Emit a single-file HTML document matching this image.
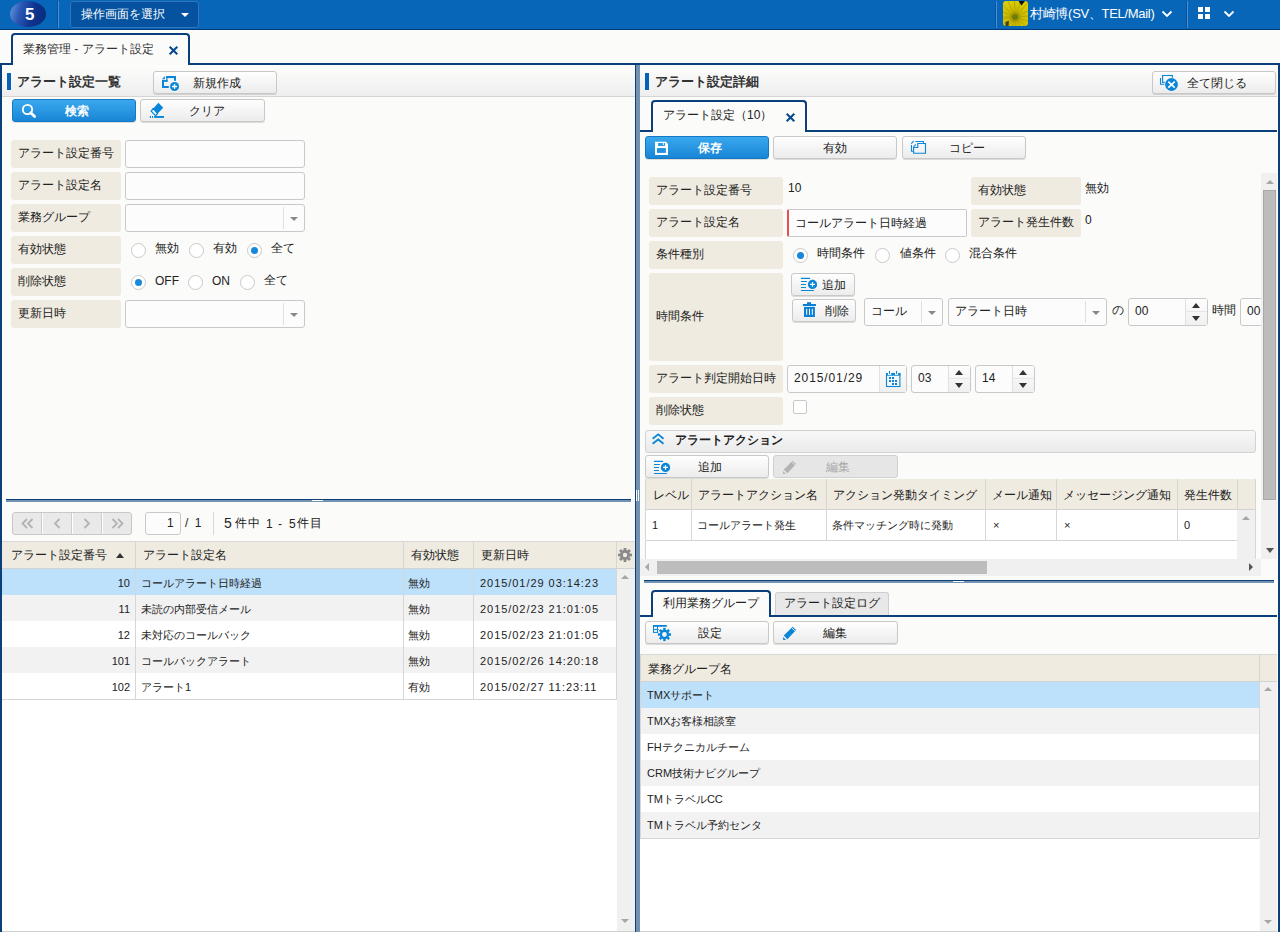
<!DOCTYPE html>
<html><head><meta charset="utf-8">
<style>
*{box-sizing:border-box;margin:0;padding:0}
html,body{width:1280px;height:932px;overflow:hidden}
body{position:relative;background:#fbfbf9;font-family:"Liberation Sans",sans-serif;font-size:12px;color:#222}
.a{position:absolute}
.t{position:absolute;white-space:nowrap;line-height:1}
.sm{font-size:11px}
/* header */
#hdr{left:0;top:0;width:1280px;height:30px;background:#0866b9;border-bottom:1px solid #023a78}
.vdiv{position:absolute;top:1px;width:2px;height:27px;border-left:1px solid #0552a0;background:#4d8fd2}
.btn{position:absolute;border:1px solid #c8c8c8;border-radius:3px;background:linear-gradient(#fefefe,#ececec);box-shadow:0 1px 0 rgba(0,0,0,.12)}
.btn.p{border-color:#1677c4;background:linear-gradient(#3aa8ee,#1886d6)}
.btn.d{background:#e6e6e6;border-color:#d0d0d0;box-shadow:none}
.lbl{position:absolute;background:#efebe0;border-radius:3px;height:28px}
.lbl span{position:absolute;left:7px;top:7px;white-space:nowrap;line-height:1;color:#222}
.inp{position:absolute;background:#fcfcfc;border:1px solid #c9c9c9;border-radius:3px;height:28px}
.sel .arr{position:absolute;right:0;top:2px;bottom:2px;width:21px;border-left:1px solid #e0e0e0}
.sel .arr:after{content:"";position:absolute;left:6px;top:10px;border-left:4px solid transparent;border-right:4px solid transparent;border-top:4px solid #888}
.rad{position:absolute;width:15px;height:15px;border:1px solid #c9c9c9;border-radius:50%;background:#fff}
.rad.on:after{content:"";position:absolute;left:3px;top:3px;width:7px;height:7px;border-radius:50%;background:#1a88d8}
.sech{position:absolute;height:33px;background:linear-gradient(#fdfdfc,#eeeeee);border-bottom:1px solid #d4d4d4}
.acc{position:absolute;width:4px;height:17px;background:#0562b8}
.grid .hd{position:absolute;background:#efebe0;border-bottom:1px solid #d2d2d2}
.vl{position:absolute;width:1px;background:#d6d6d6}
.hl{position:absolute;height:1px;background:#d6d6d6}
</style></head><body>

<!-- HEADER -->
<div id="hdr" class="a"></div>
<div class="a" style="left:10px;top:1px;width:36px;height:26px;border-radius:50%;background:linear-gradient(105deg,#6a9ae0 0%,#2a56b4 30%,#0f3590 60%,#072a78 100%)"></div>
<div class="t" style="left:25px;top:6px;font-size:17px;font-weight:bold;color:#fff">5</div>
<div class="vdiv" style="left:57px"></div>
<div class="a" style="left:70px;top:1px;width:129px;height:27px;background:#0553a0;border:1px solid #2f74bd;border-radius:3px"></div>
<div class="t" style="left:81px;top:8px;font-size:12px;color:#fff">操作画面を選択</div>
<div class="a" style="left:181px;top:13px;border-left:4px solid transparent;border-right:4px solid transparent;border-top:4px solid #fff"></div>

<div class="vdiv" style="left:995px"></div>
<svg class="a" style="left:1003px;top:1px" width="25" height="25" viewBox="0 0 25 25"><defs><clipPath id="avc"><rect width="25" height="25" rx="3"/></clipPath><radialGradient id="avg" cx="0.48" cy="0.64" r="0.7"><stop offset="0" stop-color="#6a8a10"/><stop offset="0.15" stop-color="#9a8a00"/><stop offset="0.35" stop-color="#c8b800"/><stop offset="1" stop-color="#dccf08"/></radialGradient></defs><g clip-path="url(#avc)"><rect width="25" height="25" fill="url(#avg)"/><path d="M12 16 L-8.0 16.0" stroke="#a89800" stroke-width="0.9" opacity="0.7"/><path d="M12 16 L-6.5 8.5" stroke="#a89800" stroke-width="0.9" opacity="0.7"/><path d="M12 16 L-2.4 2.1" stroke="#a89800" stroke-width="0.9" opacity="0.7"/><path d="M12 16 L3.9 -2.3" stroke="#a89800" stroke-width="0.9" opacity="0.7"/><path d="M12 16 L11.3 -4.0" stroke="#a89800" stroke-width="0.9" opacity="0.7"/><path d="M12 16 L18.8 -2.8" stroke="#a89800" stroke-width="0.9" opacity="0.7"/><path d="M12 16 L25.4 1.1" stroke="#a89800" stroke-width="0.9" opacity="0.7"/><path d="M12 16 L30.0 7.2" stroke="#a89800" stroke-width="0.9" opacity="0.7"/><path d="M12 16 L32.0 14.6" stroke="#a89800" stroke-width="0.9" opacity="0.7"/><path d="M12 16 L31.0 22.2" stroke="#a89800" stroke-width="0.9" opacity="0.7"/><path d="M12 16 L27.3 28.9" stroke="#a89800" stroke-width="0.9" opacity="0.7"/><path d="M12 16 L21.4 33.7" stroke="#a89800" stroke-width="0.9" opacity="0.7"/><path d="M12 16 L14.1 35.9" stroke="#a89800" stroke-width="0.9" opacity="0.7"/><path d="M12 16 L6.5 35.2" stroke="#a89800" stroke-width="0.9" opacity="0.7"/><path d="M12 16 L-0.3 31.8" stroke="#a89800" stroke-width="0.9" opacity="0.7"/><path d="M12 16 L-5.3 26.0" stroke="#a89800" stroke-width="0.9" opacity="0.7"/><path d="M12 16 L-7.8 18.8" stroke="#a89800" stroke-width="0.9" opacity="0.7"/><path d="M15.5 0 H22 L18.5 4.5 Z" fill="#111"/><path d="M2.5 21 L6 20 L5.5 25 L2.5 25 Z" fill="#222" opacity="0.8"/><circle cx="12" cy="16" r="2.8" fill="#5a7a10" opacity="0.8"/></g></svg>
<div class="t" style="left:1030px;top:7px;font-size:13px;color:#fff;letter-spacing:-0.3px">村崎博(SV、TEL/Mail)</div>
<svg class="a" style="left:1161px;top:10px" width="12" height="8" viewBox="0 0 12 8"><path d="M1.5 1.5 L6 6 L10.5 1.5" stroke="#fff" stroke-width="1.8" fill="none"/></svg>
<div class="vdiv" style="left:1186px"></div>
<div class="a" style="left:1198px;top:7px;width:5px;height:5px;background:#fff"></div>
<div class="a" style="left:1205px;top:7px;width:5px;height:5px;background:#fff"></div>
<div class="a" style="left:1198px;top:14px;width:5px;height:5px;background:#fff"></div>
<div class="a" style="left:1205px;top:14px;width:5px;height:5px;background:#fff"></div>
<svg class="a" style="left:1223px;top:10px" width="12" height="8" viewBox="0 0 12 8"><path d="M1.5 1.5 L6 6 L10.5 1.5" stroke="#fff" stroke-width="1.8" fill="none"/></svg>

<!-- MAIN TAB -->
<div class="a" style="left:0;top:63px;width:1280px;height:2px;background:#0b3f7c"></div>
<div class="a" style="left:11px;top:33px;width:179px;height:32px;background:#fbfbf9;border:2px solid #0b3f7c;border-bottom:none;border-radius:4px 4px 0 0"></div>
<div class="t" style="left:23px;top:43px;color:#333">業務管理 - アラート設定</div>
<svg class="a" style="left:167px;top:44px" width="12" height="12" viewBox="0 0 12 12"><path d="M2.7 2.7L10.3 10.3M10.3 2.7L2.7 10.3" stroke="#0a4a8c" stroke-width="2.1"/></svg>
<div class="a" style="left:0;top:63px;width:2px;height:869px;background:#0b3f7c"></div>
<div class="a" style="left:1278px;top:63px;width:2px;height:869px;background:#0b3f7c"></div>

<!-- LEFT PANEL -->
<!-- left section header -->
<div class="sech" style="left:2px;top:65px;width:633px;height:32px"></div>
<div class="acc" style="left:7px;top:73px"></div>
<div class="t" style="left:17px;top:75px;font-size:13px;font-weight:bold;color:#333">アラート設定一覧</div>
<div class="btn" style="left:153px;top:71px;width:124px;height:23px"></div>
<svg class="a" style="left:161px;top:75px" width="18" height="17" viewBox="0 0 18 17"><g fill="#0a86d8"><path d="M1 4.2 L3.9 1 V4.2 Z"/><rect x="5.2" y="1" width="9.8" height="2.1"/><rect x="13" y="1" width="2" height="4.8"/><rect x="5.2" y="1" width="1.3" height="5.8"/><rect x="1" y="5" width="5.5" height="1.8"/><rect x="1" y="5" width="2" height="8"/><rect x="1" y="11" width="6.8" height="2"/></g><circle cx="13.55" cy="11.5" r="5.2" fill="#f5f5f5"/><circle cx="13.55" cy="11.5" r="4.5" fill="#0a86d8"/><path d="M11 11.5H16.1M13.55 9V14" stroke="#fff" stroke-width="1.3"/></svg>
<div class="t" style="left:193px;top:77px">新規作成</div>

<div class="btn p" style="left:12px;top:99px;width:124px;height:23px"></div>
<svg class="a" style="left:21px;top:103px" width="16" height="16" viewBox="0 0 16 16"><circle cx="6.5" cy="6.5" r="4.7" stroke="#fff" stroke-width="1.8" fill="none"/><path d="M9.8 9.8 L13.6 13.6" stroke="#fff" stroke-width="2.8" stroke-linecap="round"/></svg>
<div class="t" style="left:65px;top:105px;color:#fff;font-weight:bold">検索</div>
<div class="btn" style="left:140px;top:99px;width:125px;height:23px"></div>
<svg class="a" style="left:145px;top:100px" width="20" height="20" viewBox="0 0 20 20"><path d="M13.4 2.8 L18.2 7.8 L12.5 13.7 L8.3 8.5 Z" fill="#0a86d8"/><path d="M8.3 8.5 L12.5 13.7 L10.5 15.6 L6.2 11.1 Z" fill="#fff" stroke="#0a86d8" stroke-width="1.3" stroke-linejoin="round"/><g fill="#0a86d8"><rect x="9.1" y="16" width="9.9" height="1.9"/><rect x="4.8" y="16" width="1.2" height="1.9"/><rect x="7" y="16" width="1.1" height="1.9"/></g></svg>
<div class="t" style="left:189px;top:105px">クリア</div>

<!-- form -->
<div class="lbl" style="left:11px;top:140px;width:110px"><span>アラート設定番号</span></div>
<div class="inp" style="left:125px;top:140px;width:180px"></div>
<div class="lbl" style="left:11px;top:172px;width:110px"><span>アラート設定名</span></div>
<div class="inp" style="left:125px;top:172px;width:180px"></div>
<div class="lbl" style="left:11px;top:204px;width:110px"><span>業務グループ</span></div>
<div class="inp sel" style="left:125px;top:204px;width:180px"><div class="arr"></div></div>
<div class="lbl" style="left:11px;top:236px;width:110px"><span>有効状態</span></div>
<div class="rad" style="left:131px;top:243px"></div><div class="t" style="left:155px;top:242px">無効</div>
<div class="rad" style="left:189px;top:243px"></div><div class="t" style="left:213px;top:242px">有効</div>
<div class="rad on" style="left:247px;top:243px"></div><div class="t" style="left:271px;top:242px">全て</div>
<div class="lbl" style="left:11px;top:268px;width:110px"><span>削除状態</span></div>
<div class="rad on" style="left:131px;top:275px"></div><div class="t" style="left:155px;top:275px">OFF</div>
<div class="rad" style="left:188px;top:275px"></div><div class="t" style="left:212px;top:275px">ON</div>
<div class="rad" style="left:240px;top:275px"></div><div class="t" style="left:264px;top:274px">全て</div>
<div class="lbl" style="left:11px;top:300px;width:110px"><span>更新日時</span></div>
<div class="inp sel" style="left:125px;top:300px;width:180px"><div class="arr"></div></div>

<!-- splitter horizontal -->
<div class="a" style="left:6px;top:499px;width:625px;height:3px;border-top:1px solid #0a3f7a;background:#7391b0"></div>
<div class="a" style="left:312px;top:500px;width:11px;height:1px;background:#fff"></div>

<!-- pager -->
<div class="a" style="left:12px;top:512px;width:120px;height:23px;border:1px solid #c8c8c8;border-radius:3px;background:#e9e9e9"></div>
<div class="vl" style="left:41px;top:513px;height:21px;background:#cdcdcd"></div><div class="vl" style="left:42px;top:513px;height:21px;background:#fff"></div>
<div class="vl" style="left:71px;top:513px;height:21px;background:#cdcdcd"></div><div class="vl" style="left:72px;top:513px;height:21px;background:#fff"></div>
<div class="vl" style="left:101px;top:513px;height:21px;background:#cdcdcd"></div><div class="vl" style="left:102px;top:513px;height:21px;background:#fff"></div>
<svg class="a" style="left:12px;top:512px" width="120" height="23" viewBox="0 0 120 23"><g stroke="#b3b3b3" stroke-width="1.8" fill="none"><path d="M15 7 L10.5 11.5 L15 16 M20.5 7 L16 11.5 L20.5 16"/><path d="M47.5 7 L43 11.5 L47.5 16"/><path d="M72.5 7 L77 11.5 L72.5 16"/><path d="M100.5 7 L105 11.5 L100.5 16 M106 7 L110.5 11.5 L106 16"/></g></svg>
<div class="inp" style="left:145px;top:512px;width:36px;height:23px;border-radius:3px"></div>
<div class="t" style="left:167px;top:517px">1</div>
<div class="t" style="left:185px;top:517px;letter-spacing:1.5px">/ 1</div>
<div class="vl" style="left:213px;top:512px;height:23px;background:#d8d8d8"></div>
<div class="t" style="left:224px;top:516px;font-size:14px;color:#222">5</div>
<div class="t" style="left:235px;top:517px;font-size:12px;letter-spacing:1px">件中</div>
<div class="t" style="left:266px;top:518px;font-size:12px">1</div>
<div class="t" style="left:278px;top:518px;font-size:12px">-</div>
<div class="t" style="left:289px;top:518px;font-size:12px">5</div>
<div class="t" style="left:297px;top:517px;font-size:12px;letter-spacing:1px">件目</div>

<!-- grid -->
<div class="a" style="left:2px;top:541px;width:633px;height:28px;background:#efebe0;border-top:1px solid #d8d8d8;border-bottom:1px solid #d2d2d2"></div>
<div class="vl" style="left:135px;top:542px;height:157px"></div>
<div class="vl" style="left:403px;top:542px;height:157px"></div>
<div class="vl" style="left:473px;top:542px;height:157px"></div>
<div class="vl" style="left:616px;top:542px;height:26px"></div>
<div class="t" style="left:11px;top:549px">アラート設定番号</div>
<div class="a" style="left:116px;top:553px;border-left:4px solid transparent;border-right:4px solid transparent;border-bottom:5px solid #333"></div>
<div class="t" style="left:143px;top:549px">アラート設定名</div>
<div class="t" style="left:411px;top:549px">有効状態</div>
<div class="t" style="left:481px;top:549px">更新日時</div>
<svg class="a" style="left:617px;top:547px" width="16" height="16" viewBox="0 0 16 16"><g fill="#8a8a8a"><circle cx="8" cy="8" r="5"/><rect x="6.6" y="1" width="2.8" height="14"/><rect x="1" y="6.6" width="14" height="2.8"/><rect x="6.6" y="1" width="2.8" height="14" transform="rotate(45 8 8)"/><rect x="6.6" y="1" width="2.8" height="14" transform="rotate(-45 8 8)"/></g><circle cx="8" cy="8" r="2.2" fill="#efebe0"/></svg>

<div class="a" style="left:2px;top:569px;width:615px;height:26px;background:#bde0fb"></div>
<div class="a" style="left:2px;top:595px;width:615px;height:26px;background:#f2f2f2"></div>
<div class="a" style="left:2px;top:621px;width:615px;height:26px;background:#fff"></div>
<div class="a" style="left:2px;top:647px;width:615px;height:26px;background:#f2f2f2"></div>
<div class="a" style="left:2px;top:673px;width:615px;height:26px;background:#fff"></div>
<div class="a" style="left:2px;top:699px;width:615px;height:232px;background:#fff"></div>
<div class="hl" style="left:2px;top:699px;width:615px"></div>
<div class="vl" style="left:135px;top:569px;height:130px"></div>
<div class="vl" style="left:403px;top:569px;height:130px"></div>
<div class="vl" style="left:473px;top:569px;height:130px"></div>
<div class="vl" style="left:616px;top:569px;height:130px"></div>
<!-- vscroll -->
<div class="a" style="left:617px;top:569px;width:18px;height:363px;background:#f0f0f0"></div>
<div class="a" style="left:621px;top:575px;border-left:4px solid transparent;border-right:4px solid transparent;border-bottom:4px solid #a6a6a6"></div>
<div class="a" style="left:621px;top:919px;border-left:4px solid transparent;border-right:4px solid transparent;border-top:4px solid #a6a6a6"></div>

<div class="t sm" style="right:1150px;top:578px;text-align:right">10</div>
<div class="t sm" style="left:141px;top:578px">コールアラート日時経過</div>
<div class="t sm" style="left:408px;top:578px">無効</div>
<div class="t sm" style="left:480px;top:578px;letter-spacing:0.95px">2015/01/29 03:14:23</div>
<div class="t sm" style="right:1150px;top:604px">11</div>
<div class="t sm" style="left:141px;top:604px">未読の内部受信メール</div>
<div class="t sm" style="left:408px;top:604px">無効</div>
<div class="t sm" style="left:480px;top:604px;letter-spacing:0.95px">2015/02/23 21:01:05</div>
<div class="t sm" style="right:1150px;top:630px">12</div>
<div class="t sm" style="left:141px;top:630px">未対応のコールバック</div>
<div class="t sm" style="left:408px;top:630px">無効</div>
<div class="t sm" style="left:480px;top:630px;letter-spacing:0.95px">2015/02/23 21:01:05</div>
<div class="t sm" style="right:1150px;top:656px">101</div>
<div class="t sm" style="left:141px;top:656px">コールバックアラート</div>
<div class="t sm" style="left:408px;top:656px">無効</div>
<div class="t sm" style="left:480px;top:656px;letter-spacing:0.95px">2015/02/26 14:20:18</div>
<div class="t sm" style="right:1150px;top:682px">102</div>
<div class="t sm" style="left:141px;top:682px">アラート1</div>
<div class="t sm" style="left:408px;top:682px">有効</div>
<div class="t sm" style="left:480px;top:682px;letter-spacing:0.95px">2015/02/27 11:23:11</div>
<div class="a" style="left:2px;top:931px;width:633px;height:1px;background:#cfcfcf"></div>


<!-- SPLITTER -->
<div class="a" style="left:635px;top:65px;width:1px;height:867px;background:#0b3f7c"></div>
<div class="a" style="left:636px;top:65px;width:4px;height:867px;background:#7391b0"></div>
<div class="a" style="left:636px;top:490px;width:1px;height:11px;background:#fff"></div>
<div class="a" style="left:638px;top:490px;width:1px;height:11px;background:#fff"></div>

<!-- RIGHT PANEL -->
<!-- right section header -->
<div class="sech" style="left:640px;top:65px;width:637px;height:32px"></div>
<div class="acc" style="left:645px;top:73px"></div>
<div class="t" style="left:655px;top:75px;font-size:13px;font-weight:bold;color:#333">アラート設定詳細</div>
<div class="btn" style="left:1152px;top:71px;width:124px;height:23px"></div>
<svg class="a" style="left:1158px;top:73px" width="22" height="20" viewBox="0 0 22 20"><rect x="4.6" y="2.5" width="9.8" height="6.9" stroke="#0a86d8" stroke-width="1.1" fill="none"/><path d="M2.5 5.1 V11.3 H7.2" stroke="#0a86d8" stroke-width="1.1" fill="none"/><circle cx="13.5" cy="11.5" r="7.1" fill="#f4f4f4"/><circle cx="13.5" cy="11.5" r="6.4" fill="#0a86d8"/><path d="M10.3 8.6 L16.7 14.6 M16.7 8.6 L10.3 14.6" stroke="#fff" stroke-width="1.7"/></svg>
<div class="t" style="left:1187px;top:77px">全て閉じる</div>

<!-- inner tab -->
<div class="a" style="left:640px;top:130px;width:637px;height:2px;background:#0b3f7c"></div>
<div class="a" style="left:651px;top:100px;width:156px;height:32px;background:#fbfbf9;border:2px solid #0b3f7c;border-bottom:none;border-radius:4px 4px 0 0"></div>
<div class="t" style="left:663px;top:109px">アラート設定（10）</div>
<svg class="a" style="left:784px;top:111px" width="12" height="12" viewBox="0 0 12 12"><path d="M2.7 2.7L10.3 10.3M10.3 2.7L2.7 10.3" stroke="#0a4a8c" stroke-width="2.1"/></svg>

<!-- action buttons -->
<div class="btn p" style="left:645px;top:136px;width:124px;height:23px"></div>
<svg class="a" style="left:654px;top:140px" width="16" height="16" viewBox="0 0 16 16"><path d="M1 1.8 H12 L14 4 V15 H1 Z" fill="#fff"/><rect x="4.1" y="3" width="6.9" height="3" fill="#2a9ae6"/><rect x="8.8" y="3" width="1" height="2" fill="#fff"/><rect x="3" y="8.1" width="8.9" height="4.8" fill="#2290de"/></svg>
<div class="t" style="left:698px;top:142px;color:#fff;font-weight:bold">保存</div>
<div class="btn" style="left:773px;top:136px;width:124px;height:23px"></div>
<div class="t" style="left:823px;top:142px">有効</div>
<div class="btn" style="left:902px;top:136px;width:124px;height:23px"></div>
<svg class="a" style="left:906px;top:136px" width="22" height="20" viewBox="0 0 22 20"><g stroke="#0a86d8" stroke-width="1.1" fill="none"><path d="M9.3 5.5 H17.4 V7.5"/><path d="M5.5 9 V15.3 H7.6"/><path d="M11.8 7.5 H19.5 V17.3 H7.6 V11.5 H11.8 Z"/><path d="M5.2 7.6 L7.6 5.2 M7.4 11 L9.8 8.3"/></g></svg>
<div class="t" style="left:949px;top:142px">コピー</div>

<!-- form -->
<div class="lbl" style="left:649px;top:177px;width:134px"><span>アラート設定番号</span></div>
<div class="t" style="left:788px;top:182px">10</div>
<div class="lbl" style="left:971px;top:177px;width:110px"><span>有効状態</span></div>
<div class="t" style="left:1085px;top:182px">無効</div>
<div class="lbl" style="left:649px;top:209px;width:134px"><span>アラート設定名</span></div>
<div class="inp" style="left:787px;top:209px;width:180px;border-left:2px solid #e84f4f;border-radius:2px"></div>
<div class="t" style="left:795px;top:217px">コールアラート日時経過</div>
<div class="lbl" style="left:971px;top:209px;width:110px"><span>アラート発生件数</span></div>
<div class="t" style="left:1085px;top:214px">0</div>
<div class="lbl" style="left:649px;top:241px;width:134px"><span>条件種別</span></div>
<div class="rad on" style="left:793px;top:248px"></div><div class="t" style="left:817px;top:247px">時間条件</div>
<div class="rad" style="left:875px;top:248px"></div><div class="t" style="left:900px;top:247px">値条件</div>
<div class="rad" style="left:945px;top:248px"></div><div class="t" style="left:969px;top:247px">混合条件</div>
<div class="lbl" style="left:649px;top:273px;width:134px;height:88px"><span style="top:37px">時間条件</span></div>
<div class="btn" style="left:791px;top:273px;width:64px;height:23px"></div>
<svg class="a" style="left:799px;top:276px" width="18" height="17" viewBox="0 0 18 17"><g stroke="#0a86d8" stroke-width="1.1" stroke-linecap="round"><path d="M2.4 2.4 H10.6 M2.4 5.5 H7.5 M2.4 8.5 H6.5 M2.4 11.5 H6.5 M2.4 14.5 H14.5"/></g><circle cx="13.5" cy="8.4" r="5.3" fill="#f4f4f4"/><circle cx="13.5" cy="8.4" r="4.6" fill="#0a86d8"/><path d="M11 8.4H16M13.5 6V10.8" stroke="#fff" stroke-width="1.2"/></svg>
<div class="t" style="left:822px;top:279px">追加</div>
<div class="btn" style="left:792px;top:299px;width:64px;height:23px"></div>
<svg class="a" style="left:802px;top:301px" width="16" height="17" viewBox="0 0 16 17"><g fill="#0a7fd4"><rect x="5" y="1.2" width="4" height="2"/><rect x="0.9" y="3" width="13.1" height="2"/><rect x="2" y="5.9" width="10.9" height="10.1"/></g><g fill="#fff"><rect x="4.2" y="7.8" width="1" height="6"/><rect x="7" y="7.8" width="1" height="6"/><rect x="9.8" y="7.8" width="1" height="6"/></g></svg>
<div class="t" style="left:825px;top:305px">削除</div>
<div class="inp sel" style="left:864px;top:298px;width:79px"><div class="arr"></div></div>
<div class="t" style="left:871px;top:305px">コール</div>
<div class="inp sel" style="left:948px;top:298px;width:159px"><div class="arr"></div></div>
<div class="t" style="left:955px;top:305px">アラート日時</div>
<div class="t" style="left:1112px;top:304px">の</div>
<div class="inp" style="left:1128px;top:298px;width:80px"></div>
<div class="a" style="left:1185px;top:299px;width:22px;height:26px;border-left:1px solid #e0e0e0;background:linear-gradient(#fdfdfd,#f0f0f0)"></div>
<div class="hl" style="left:1186px;top:311px;width:21px;background:#e6e6e6"></div>
<div class="a" style="left:1192px;top:303px;border-left:4px solid transparent;border-right:4px solid transparent;border-bottom:5px solid #333"></div>
<div class="a" style="left:1192px;top:316px;border-left:4px solid transparent;border-right:4px solid transparent;border-top:5px solid #333"></div>
<div class="t" style="left:1135px;top:305px">00</div>
<div class="t" style="left:1212px;top:304px">時間</div>
<div class="a" style="left:1240px;top:298px;width:22px;height:28px;overflow:hidden"><div class="inp" style="left:0;top:0;width:60px"></div><div class="t" style="left:7px;top:7px">00</div></div>

<div class="lbl" style="left:649px;top:365px;width:134px"><span>アラート判定開始日時</span></div>
<div class="inp" style="left:787px;top:365px;width:120px"></div>
<div class="a" style="left:879px;top:366px;width:27px;height:26px;border-left:1px solid #e0e0e0;background:linear-gradient(#fdfdfd,#f0f0f0)"></div>
<svg class="a" style="left:885px;top:370px" width="16" height="18" viewBox="0 0 16 18"><rect x="1.5" y="3.5" width="13.4" height="13" stroke="#0a86d8" stroke-width="1.1" fill="none"/><rect x="1" y="3" width="14.4" height="2.7" fill="#0a86d8"/><rect x="2.9" y="3" width="3.3" height="1.9" fill="#f6f6f6"/><rect x="10" y="3" width="3.1" height="1.9" fill="#f6f6f6"/><g fill="#0a86d8"><rect x="4" y="0.9" width="1" height="3"/><rect x="11" y="0.9" width="1" height="3"/><rect x="4" y="7" width="2" height="2"/><rect x="7" y="7" width="2" height="2"/><rect x="4" y="10" width="2" height="2"/><rect x="7" y="10" width="2" height="2"/><rect x="10" y="10" width="2" height="2"/><rect x="7" y="13" width="2" height="2"/><rect x="10" y="13" width="2" height="2"/></g></svg>
<div class="t" style="left:794px;top:372px;letter-spacing:0.9px">2015/01/29</div>
<div class="inp" style="left:911px;top:365px;width:60px"></div>
<div class="a" style="left:948px;top:366px;width:22px;height:26px;border-left:1px solid #e0e0e0;background:linear-gradient(#fdfdfd,#f0f0f0)"></div>
<div class="hl" style="left:949px;top:378px;width:21px;background:#e6e6e6"></div>
<div class="a" style="left:955px;top:370px;border-left:4px solid transparent;border-right:4px solid transparent;border-bottom:5px solid #333"></div>
<div class="a" style="left:955px;top:383px;border-left:4px solid transparent;border-right:4px solid transparent;border-top:5px solid #333"></div>
<div class="t" style="left:918px;top:372px">03</div>
<div class="inp" style="left:975px;top:365px;width:60px"></div>
<div class="a" style="left:1012px;top:366px;width:22px;height:26px;border-left:1px solid #e0e0e0;background:linear-gradient(#fdfdfd,#f0f0f0)"></div>
<div class="hl" style="left:1013px;top:378px;width:21px;background:#e6e6e6"></div>
<div class="a" style="left:1019px;top:370px;border-left:4px solid transparent;border-right:4px solid transparent;border-bottom:5px solid #333"></div>
<div class="a" style="left:1019px;top:383px;border-left:4px solid transparent;border-right:4px solid transparent;border-top:5px solid #333"></div>
<div class="t" style="left:982px;top:372px">14</div>
<div class="lbl" style="left:649px;top:397px;width:134px"><span>削除状態</span></div>
<div class="a" style="left:793px;top:400px;width:14px;height:14px;border:1px solid #c9c9c9;background:#fff;border-radius:2px"></div>

<!-- alert action -->
<div class="a" style="left:645px;top:430px;width:611px;height:23px;border:1px solid #d2d2d2;border-radius:3px;background:linear-gradient(#f8f8f8,#eaeaea)"></div>
<svg class="a" style="left:651px;top:432px" width="14" height="14" viewBox="0 0 14 14"><path d="M1.6 6.8 L7.2 2.4 L12.5 6.8 M1.6 11.8 L7.2 7.5 L12.5 11.8" stroke="#0a86d8" stroke-width="1.8" fill="none"/></svg>
<div class="t" style="left:675px;top:434px;font-size:12px;font-weight:bold">アラートアクション</div>
<div class="btn" style="left:645px;top:455px;width:124px;height:23px"></div>
<svg class="a" style="left:652px;top:459px" width="18" height="17" viewBox="0 0 18 17"><g stroke="#0a86d8" stroke-width="1.1" stroke-linecap="round"><path d="M2.4 2.4 H10.6 M2.4 5.5 H7.5 M2.4 8.5 H6.5 M2.4 11.5 H6.5 M2.4 14.5 H14.5"/></g><circle cx="13.5" cy="8.4" r="5.3" fill="#f4f4f4"/><circle cx="13.5" cy="8.4" r="4.6" fill="#0a86d8"/><path d="M11 8.4H16M13.5 6V10.8" stroke="#fff" stroke-width="1.2"/></svg>
<div class="t" style="left:698px;top:461px">追加</div>
<div class="btn d" style="left:773px;top:455px;width:125px;height:23px"></div>
<svg class="a" style="left:781px;top:458px" width="17" height="17" viewBox="0 0 17 17"><path d="M11.7 2.8 L15.1 6 L6.4 15.2 L2.8 11.5 Z" fill="#b3b3b3"/><path d="M10.9 4 L14.1 7" stroke="#e6e6e6" stroke-width="0.9"/><path d="M2.1 12.9 V16 H5 Z" fill="#b3b3b3"/></svg>
<div class="t" style="left:826px;top:461px;color:#a8a8a8">編集</div>

<!-- action grid -->
<div class="a" style="left:645px;top:479px;width:611px;height:31px;background:#efebe0;border-bottom:1px solid #d2d2d2"></div>
<div class="a" style="left:645px;top:510px;width:592px;height:49px;background:#fff"></div>
<div class="vl" style="left:645px;top:479px;height:80px"></div>
<div class="vl" style="left:691px;top:479px;height:61px"></div>
<div class="vl" style="left:826px;top:479px;height:61px"></div>
<div class="vl" style="left:985px;top:479px;height:61px"></div>
<div class="vl" style="left:1056px;top:479px;height:61px"></div>
<div class="vl" style="left:1177px;top:479px;height:61px"></div>
<div class="vl" style="left:1237px;top:479px;height:31px"></div>
<div class="vl" style="left:1255px;top:479px;height:31px"></div>
<div class="hl" style="left:645px;top:540px;width:592px"></div>
<div class="t" style="left:653px;top:489px">レベル</div>
<div class="t" style="left:698px;top:489px">アラートアクション名</div>
<div class="t" style="left:833px;top:489px">アクション発動タイミング</div>
<div class="t" style="left:992px;top:489px">メール通知</div>
<div class="t" style="left:1063px;top:489px">メッセージング通知</div>
<div class="t" style="left:1184px;top:489px">発生件数</div>
<div class="t sm" style="left:652px;top:520px">1</div>
<div class="t sm" style="left:697px;top:520px">コールアラート発生</div>
<div class="t sm" style="left:832px;top:520px">条件マッチング時に発動</div>
<div class="t sm" style="left:993px;top:520px">×</div>
<div class="t sm" style="left:1064px;top:520px">×</div>
<div class="t sm" style="left:1184px;top:520px">0</div>
<!-- grid vscroll -->
<div class="a" style="left:1237px;top:510px;width:18px;height:49px;background:#f0f0f0"></div>
<div class="vl" style="left:1255px;top:479px;height:80px"></div>
<div class="a" style="left:1242px;top:516px;border-left:4px solid transparent;border-right:4px solid transparent;border-bottom:4px solid #a6a6a6"></div>
<!-- hscroll -->
<div class="a" style="left:640px;top:559px;width:621px;height:17px;background:#f0f0f0"></div>
<div class="a" style="left:657px;top:561px;width:330px;height:13px;background:#bdbdbd"></div>
<div class="a" style="left:645px;top:563px;border-top:4px solid transparent;border-bottom:4px solid transparent;border-right:4px solid #a6a6a6"></div>
<div class="a" style="left:1249px;top:563px;border-top:4px solid transparent;border-bottom:4px solid transparent;border-left:4px solid #555"></div>
<!-- form vscroll -->
<div class="a" style="left:1261px;top:173px;width:16px;height:386px;background:#f0f0f0"></div>
<div class="a" style="left:1263px;top:190px;width:13px;height:310px;background:#bcbcbc;border:1px solid #a9a9a9"></div>
<div class="a" style="left:1266px;top:180px;border-left:4px solid transparent;border-right:4px solid transparent;border-bottom:4px solid #a6a6a6"></div>
<div class="a" style="left:1266px;top:548px;border-left:4px solid transparent;border-right:4px solid transparent;border-top:5px solid #555"></div>

<!-- splitter horiz -->
<div class="a" style="left:644px;top:580px;width:630px;height:3px;border-top:1px solid #0a3f7a;background:#7391b0"></div>
<div class="a" style="left:953px;top:581px;width:11px;height:1px;background:#fff"></div>

<!-- bottom tabs -->
<div class="a" style="left:640px;top:615px;width:637px;height:2px;background:#0b3f7c"></div>
<div class="a" style="left:775px;top:592px;width:114px;height:23px;background:#e8e8e8;border:1px solid #cfcfcf;border-bottom:none;border-radius:3px 3px 0 0"></div>
<div class="t" style="left:784px;top:597px">アラート設定ログ</div>
<div class="a" style="left:651px;top:590px;width:120px;height:27px;background:#fbfbf9;border:2px solid #0b3f7c;border-bottom:none;border-radius:4px 4px 0 0"></div>
<div class="t" style="left:663px;top:597px">利用業務グループ</div>

<div class="btn" style="left:645px;top:621px;width:124px;height:23px"></div>
<svg class="a" style="left:652px;top:624px" width="20" height="19" viewBox="0 0 20 19"><g fill="#0a86d8"><rect x="1" y="1" width="13.8" height="1.8"/><rect x="1" y="1" width="1" height="7.8"/><rect x="1" y="4.9" width="5.6" height="1"/><rect x="1" y="7.9" width="5.6" height="1"/><rect x="5" y="1" width="1" height="7.8"/></g><circle cx="12.45" cy="10.5" r="6.6" fill="#f5f5f5"/><g fill="#0a86d8" transform="translate(12.45 10.5)"><circle r="4.7"/><rect x="-1.25" y="-6.6" width="2.5" height="13.2" transform="rotate(0)"/><rect x="-1.25" y="-6.6" width="2.5" height="13.2" transform="rotate(45)"/><rect x="-1.25" y="-6.6" width="2.5" height="13.2" transform="rotate(90)"/><rect x="-1.25" y="-6.6" width="2.5" height="13.2" transform="rotate(135)"/></g><circle cx="12.45" cy="10.5" r="2.4" fill="#f5f5f5"/></svg>
<div class="t" style="left:698px;top:627px">設定</div>
<div class="btn" style="left:773px;top:621px;width:125px;height:23px"></div>
<svg class="a" style="left:781px;top:624px" width="17" height="17" viewBox="0 0 17 17"><path d="M11.7 2.8 L15.1 6 L6.4 15.2 L2.8 11.5 Z" fill="#0a86d8"/><path d="M10.9 4 L14.1 7" stroke="#f6f6f6" stroke-width="0.9"/><path d="M2.1 12.9 V16 H5 Z" fill="#0a86d8"/></svg>
<div class="t" style="left:823px;top:627px">編集</div>

<!-- group grid -->
<div class="a" style="left:640px;top:654px;width:637px;height:28px;background:#efebe0;border-top:1px solid #d8d8d8;border-bottom:1px solid #d2d2d2"></div>
<div class="vl" style="left:1259px;top:655px;height:26px"></div>
<div class="t" style="left:648px;top:663px">業務グループ名</div>
<div class="a" style="left:640px;top:682px;width:619px;height:26px;background:#bde0fb"></div>
<div class="a" style="left:640px;top:708px;width:619px;height:26px;background:#f2f2f2"></div>
<div class="a" style="left:640px;top:734px;width:619px;height:26px;background:#fff"></div>
<div class="a" style="left:640px;top:760px;width:619px;height:26px;background:#f2f2f2"></div>
<div class="a" style="left:640px;top:786px;width:619px;height:26px;background:#fff"></div>
<div class="a" style="left:640px;top:812px;width:619px;height:26px;background:#f2f2f2"></div>
<div class="a" style="left:640px;top:838px;width:619px;height:94px;background:#fff"></div>
<div class="hl" style="left:640px;top:838px;width:619px"></div>
<div class="vl" style="left:640px;top:655px;height:184px"></div>
<div class="vl" style="left:1259px;top:682px;height:156px"></div>
<div class="a" style="left:1260px;top:682px;width:17px;height:250px;background:#f0f0f0"></div>
<div class="a" style="left:1264px;top:687px;border-left:4px solid transparent;border-right:4px solid transparent;border-bottom:4px solid #a6a6a6"></div>
<div class="a" style="left:1264px;top:920px;border-left:4px solid transparent;border-right:4px solid transparent;border-top:4px solid #a6a6a6"></div>
<div class="t sm" style="left:647px;top:690px">TMXサポート</div>
<div class="t sm" style="left:647px;top:716px">TMXお客様相談室</div>
<div class="t sm" style="left:647px;top:742px">FHテクニカルチーム</div>
<div class="t sm" style="left:647px;top:768px">CRM技術ナビグループ</div>
<div class="t sm" style="left:647px;top:794px">TMトラベルCC</div>
<div class="t sm" style="left:647px;top:820px">TMトラベル予約センタ</div>
<div class="a" style="left:640px;top:931px;width:637px;height:1px;background:#cfcfcf"></div>


</body></html>
